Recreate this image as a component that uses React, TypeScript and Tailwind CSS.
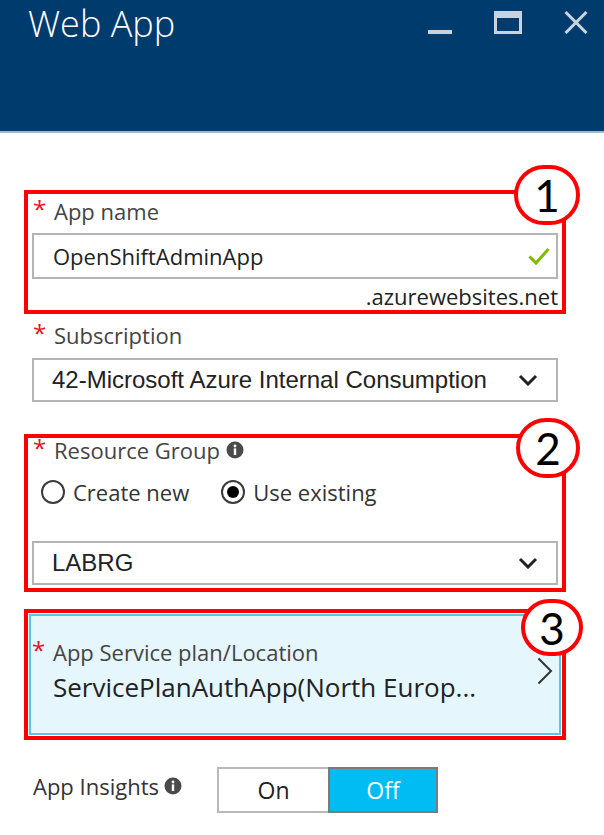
import React from 'react';

const Asterisk: React.FC = () => (
  <span className="text-[#e81123] text-[24px] leading-none w-[21px] -mt-[4px] shrink-0">*</span>
);

const InfoIcon: React.FC = () => (
  <svg width="18" height="18" viewBox="0 0 18 18" className="shrink-0">
    <circle cx="9" cy="9" r="8.5" fill="#4a4a4a" />
    <circle cx="9" cy="5" r="1.4" fill="#fff" />
    <rect x="7.8" y="7.4" width="2.4" height="6.6" fill="#fff" />
  </svg>
);

const ChevronDown: React.FC = () => (
  <svg width="20" height="12" viewBox="0 0 20 12" className="shrink-0">
    <path d="M2 2 L10 10 L18 2" fill="none" stroke="#222" strokeWidth="3" />
  </svg>
);

const Marker: React.FC<{ n: number; pos: string; size: string }> = ({ n, pos, size }) => (
  <div
    className={`absolute ${pos} ${size} rounded-full border-4 border-[#ff0000] bg-white flex items-center justify-center text-black font-['Lato',sans-serif] text-[44px] leading-none`}
  >
    {n}
  </div>
);

const Radio: React.FC<{ checked?: boolean; label: string }> = ({ checked, label }) => (
  <label className="flex items-center gap-[8px]">
    <span className="w-[24px] h-[24px] rounded-full border-2 border-[#3a3a3a] bg-white flex items-center justify-center">
      {checked && <span className="w-[12px] h-[12px] rounded-full bg-black" />}
    </span>
    <span className="text-[22px] leading-[28px] text-[#333]">{label}</span>
  </label>
);

const Select: React.FC<{ value: string }> = ({ value }) => (
  <div className="h-[44px] border-2 border-[#b4b4b4] bg-white flex items-center justify-between pl-[18px] pr-[18px]">
    <span className="font-['Liberation_Sans',Arial,sans-serif] text-[24px] text-[#222]">{value}</span>
    <ChevronDown />
  </div>
);

export default function App() {
  return (
    <div className="w-[604px] h-[835px] bg-white overflow-hidden font-['Open_Sans',sans-serif]">
      {/* Blade header */}
      <header className="h-[133px] bg-[#003b6d] border-b-2 border-[#a9b4bf] flex items-start justify-between pl-[28px] pr-[16px]">
        <h1 className="text-[36px] font-light text-white leading-none mt-[6px]">Web App</h1>
        <div className="flex items-start gap-[42px] mt-[11px]">
          <svg width="24" height="23" viewBox="0 0 24 23">
            <rect x="0" y="19" width="24" height="4" fill="#c9d4df" />
          </svg>
          <svg width="28" height="23" viewBox="0 0 28 23">
            <path d="M0 0 H28 V23 H0 Z M3 7 V20 H25 V7 Z" fill="#c9d4df" fillRule="evenodd" />
          </svg>
          <svg width="24" height="23" viewBox="0 0 24 23">
            <path d="M1.5 1 L22.5 22 M22.5 1 L1.5 22" stroke="#c9d4df" strokeWidth="3" />
          </svg>
        </div>
      </header>

      <main className="px-[24px] pt-[57px] w-[542px] box-content">
        {/* App name */}
        <section className="relative border-4 border-[#ff0000] px-[4px] pt-[3px] pb-[2px]">
          <div className="flex items-center h-[28px] pl-[1px]">
            <Asterisk />
            <span className="text-[22px] text-[#444]">App name</span>
          </div>
          <div className="mt-[8px] h-[46px] border-2 border-[#b4b4b4] flex items-center justify-between pl-[19px] pr-[6px]">
            <span className="text-[22px] text-[#222]">OpenShiftAdminApp</span>
            <svg width="22" height="18" viewBox="0 0 22 18">
              <path d="M1.5 9.5 L8 16 L20.5 2" fill="none" stroke="#7fba00" strokeWidth="3" />
            </svg>
          </div>
          <div className="mt-[5px] h-[24px] text-right text-[22px] leading-[24px] text-[#222]">.azurewebsites.net</div>
          <Marker n={1} pos="-top-[29px] -right-[18px]" size="w-[66px] h-[60px]" />
        </section>

        {/* Subscription */}
        <section className="px-[8px]">
          <div className="flex items-center h-[28px] mt-[7px] pl-[1px]">
            <Asterisk />
            <span className="text-[22px] text-[#444]">Subscription</span>
          </div>
          <div className="mt-[9px]">
            <Select value="42-Microsoft Azure Internal Consumption" />
          </div>
        </section>

        {/* Resource group */}
        <section className="relative mt-[32px] border-4 border-[#ff0000] px-[4px] pb-[3px]">
          <div className="flex items-center h-[24px] pl-[1px] gap-[6px]">
            <div className="flex items-center">
              <Asterisk />
              <span className="text-[22px] leading-[24px] text-[#444]">Resource Group</span>
            </div>
            <InfoIcon />
          </div>
          <div className="mt-[16px] flex items-center gap-[32px] pl-[9px]">
            <Radio label="Create new" />
            <Radio checked label="Use existing" />
          </div>
          <div className="mt-[35px]">
            <Select value="LABRG" />
          </div>
          <Marker n={2} pos="-top-[20px] -right-[18px]" size="w-[64px] h-[60px]" />
        </section>

        {/* App Service plan */}
        <section className="relative mt-[17px] border-4 border-[#ff0000] p-[1px]">
          <div className="h-[121px] bg-[#e5f6fd] border-2 border-[#56c6ee] pl-[1px] pr-[6px] pt-[24px] flex items-start justify-between">
            <div>
              <div className="flex items-center h-[24px]">
                <Asterisk />
                <span className="text-[22px] leading-[24px] text-[#444]">App Service plan/Location</span>
              </div>
              <div className="mt-[8px] pl-[21px] text-[26px] leading-[30px] text-[#222]">
                ServicePlanAuthApp(North Europ...
              </div>
            </div>
            <svg width="16" height="28" viewBox="0 0 16 28" className="mt-[17px]">
              <path d="M1.5 1.5 L14 14 L1.5 26.5" fill="none" stroke="#333" strokeWidth="2" />
            </svg>
          </div>
          <Marker n={3} pos="-top-[14px] -right-[21px]" size="w-[62px] h-[57px]" />
        </section>

        {/* App insights */}
        <section className="mt-[27px] flex items-start pl-[9px]">
          <div className="flex items-center gap-[5px] w-[184px] h-[38px]">
            <span className="text-[22px] text-[#333]">App Insights</span>
            <InfoIcon />
          </div>
          <div className="flex h-[46px]">
            <button className="w-[111px] h-full bg-white border-2 border-[#b9b9b9] border-r-0 text-[23px] text-[#222]">On</button>
            <button className="w-[110px] h-full bg-[#00bcf2] border-2 border-[#7b7b7b] text-[23px] text-white">Off</button>
          </div>
        </section>
      </main>
    </div>
  );
}
